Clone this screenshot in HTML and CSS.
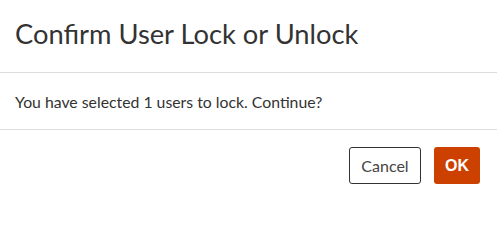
FILE: index.html
```html
<!DOCTYPE html>
<html>
<head>
<meta charset="utf-8">
<link rel="stylesheet" href="styles.css">
</head>
<body>
<div class="dialog">
  <div class="header"><h1 class="title">Confirm User Lock or Unlock</h1></div>
  <div class="body"><p class="msg">You have selected 1 users to lock. Continue?</p></div>
  <div class="footer">
    <button class="btn btn-cancel">Cancel</button>
    <button class="btn btn-ok">OK</button>
  </div>
</div>
</body>
</html>
```
FILE: styles.css
```css
html, body { margin: 0; padding: 0; background: #fff; }
body { font-family: Lato, "Noto Sans", sans-serif; color: #2b2b2b; }
.dialog { width: 497px; height: 200px; display: flex; flex-direction: column; }
.header { height: 73px; border-bottom: 1px solid #dcdcdc; display: flex; align-items: center; padding: 0 15px 5px; box-sizing: border-box; }
.title { margin: 0; font-size: 27.3px; font-weight: 400; color: #333; }
.body { height: 57px; border-bottom: 1px solid #dcdcdc; display: flex; align-items: center; padding: 0 15px; box-sizing: border-box; }
.msg { margin: 0; font-size: 15.8px; color: #333; }
.footer { display: flex; justify-content: flex-end; gap: 13px; padding: 17px 17px 0 0; }
.btn { height: 37px; border-radius: 3px; font-family: Lato, sans-serif; font-size: 16px; cursor: pointer; padding: 0; }
.btn-cancel { width: 72px; background: #fff; border: 1px solid #333; color: #444; }
.btn-ok { width: 46px; background: #cc4100; border: none; color: #fff; font-weight: 700; font-family: "Liberation Sans", Arial, sans-serif; font-size: 16px; }
```
